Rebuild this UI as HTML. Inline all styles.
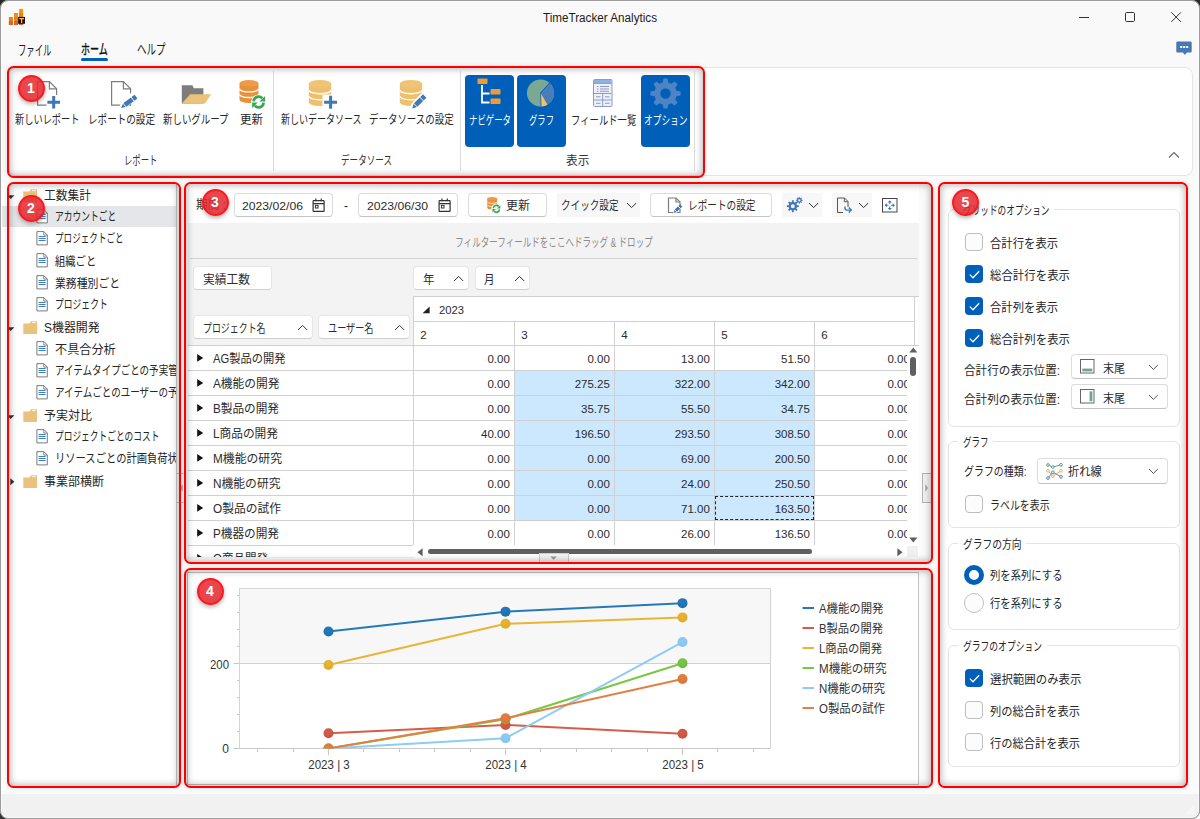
<!DOCTYPE html>
<html lang="ja"><head><meta charset="utf-8"><title>TimeTracker Analytics</title>
<style>
html,body{margin:0;padding:0;}
body{width:1200px;height:819px;overflow:hidden;background:#f9f9f9;position:relative;font-family:"Liberation Sans","Noto Sans CJK JP",sans-serif;}
#w div,#w span,#w svg{position:absolute;box-sizing:border-box;}
#w{position:absolute;left:0;top:0;width:1200px;height:819px;overflow:hidden;}
.t{white-space:nowrap;line-height:20px;height:20px;display:block;}
.btn{background:#fff;border:1px solid #dcdcdc;border-bottom-color:#c4c4c4;border-radius:4px;}
.pbtn{background:#fff;border:1px solid #e6e6e6;border-bottom-color:#cfcfcf;border-radius:4px;}
.red{border:2.1px solid #f00;border-radius:6.5px;box-shadow:inset 0 0 7px 1px rgba(0,0,0,.30),0 0 5px rgba(0,0,0,.13);}
.badge{border-radius:50%;background:radial-gradient(circle at 50% 40%,rgba(232,45,52,.86) 0,rgba(225,38,45,.86) 60%,rgba(222,30,38,.88) 100%);border:2px solid rgba(255,22,28,.96);box-shadow:0 2px 4px rgba(0,0,0,.3);}
.gb{border:1px solid #e3e3e3;border-radius:6px;}
.cb{width:18px;height:18px;border-radius:4px;border:1px solid #bdbdbd;background:#fcfcfc;}
.cbk{width:18px;height:18px;border-radius:4px;background:#005fb8;}
</style></head>
<body><div id="w">
<div style="left:1188px;top:0px;width:12px;height:12px;background:#2a2a2a;"></div>
<div style="left:0px;top:0px;width:12px;height:12px;background:#2a2a2a;"></div>
<div style="left:0px;top:807px;width:12px;height:12px;background:#333;"></div>
<div style="left:0px;top:0px;width:1200px;height:819px;background:#f9f9f9;border:1px solid #9a9a9a;border-radius:8px;"></div>
<div style="left:1px;top:794px;width:1198px;height:24px;background:#f1f1f1;border-radius:0 0 7px 7px;"></div>
<svg style="left:8px;top:8px;" width="18" height="18" viewBox="0 0 18 18"><rect x=".9" y="9" width="4" height="8" fill="#e8801e"/><rect x=".9" y="13" width="4" height="4" fill="#e0622e"/>
<rect x="6" y="5" width="4" height="12" fill="#f09208"/><rect x="6" y="9" width="4" height="8" fill="#e8801e"/><rect x="6" y="13" width="4" height="4" fill="#e0622e"/>
<rect x="11.1" y=".9" width="4" height="16.1" fill="#f29a06"/><rect x="11.1" y="5" width="4" height="12" fill="#e8801e"/><rect x="11.1" y="13" width="4" height="4" fill="#e0622e"/>
<rect x="10.1" y="8.9" width="6.9" height="6.9" fill="#2a0f1a"/><path d="M11.2 10h4.8v1.3h-1.8v3.7h-1.2v-3.7h-1.8z" fill="#f8c233"/></svg>
<span class="t" style="top:7.50px;font-size:12px;color:#1b1b1b;left:599.50px;transform-origin:0 50%;transform:translateX(-48.660%) scaleX(0.9732);">TimeTracker Analytics</span>
<svg style="left:1075px;top:8px;" width="112" height="20" viewBox="0 0 112 20"><path d="M4 9.5h10" stroke="#333" stroke-width="1" fill="none"/>
<rect x="50.5" y="4.5" width="9" height="9" rx="1.2" stroke="#333" stroke-width="1" fill="none"/>
<path d="M96.3 4.3l9.6 9.6M105.9 4.3l-9.6 9.6" stroke="#333" stroke-width="1" fill="none"/></svg>
<span class="t" style="top:39.50px;font-size:14px;color:#1b1b1b;left:18.30px;transform-origin:0 50%;transform:scaleX(0.5946);">ファイル</span>
<span class="t" style="top:38.50px;font-size:14px;color:#111;left:81.30px;transform-origin:0 50%;transform:scaleX(0.6419);-webkit-text-stroke:0.4px #111;">ホーム</span>
<div style="left:81.3px;top:58px;width:26.7px;height:3px;background:#005fb8;border-radius:1.5px;"></div>
<span class="t" style="top:38.50px;font-size:14px;color:#1b1b1b;left:136.70px;transform-origin:0 50%;transform:scaleX(0.6810);">ヘルプ</span>
<svg style="left:1176px;top:41px;" width="16" height="16" viewBox="0 0 16 16"><path d="M1.5 0.5h13a1.2 1.2 0 0 1 1.2 1.2v8.6a1.2 1.2 0 0 1-1.2 1.2h-3.6l-2 2.6-2-2.6H1.5a1.2 1.2 0 0 1-1.2-1.2V1.7A1.2 1.2 0 0 1 1.5.5z" fill="#4878b4"/><rect x="4.2" y="5" width="2" height="2" fill="#fff"/><rect x="7.2" y="5" width="2" height="2" fill="#fff"/><rect x="10.2" y="5" width="2" height="2" fill="#fff"/></svg>
<div style="left:8px;top:67px;width:1185px;height:109px;background:#fff;border:1px solid #e4e4e4;border-radius:8px;"></div>
<div style="left:273px;top:71px;width:1px;height:100px;background:#dcdcdc;"></div>
<div style="left:460px;top:71px;width:1px;height:100px;background:#dcdcdc;"></div>
<div style="left:694px;top:71px;width:1px;height:100px;background:#dcdcdc;"></div>
<div style="left:465px;top:75px;width:49px;height:72px;background:#005fb8;border-radius:4px;"></div>
<div style="left:517px;top:75px;width:49px;height:72px;background:#005fb8;border-radius:4px;"></div>
<div style="left:641px;top:75px;width:49px;height:72px;background:#005fb8;border-radius:4px;"></div>
<svg style="left:1166px;top:150px;" width="16" height="10" viewBox="0 0 16 10"><path d="M3 7.5l5-5 5 5" stroke="#666" stroke-width="1.1" fill="none"/></svg>
<svg style="left:36px;top:78px;" width="28" height="32" viewBox="0 0 28 32"><path d="M1.6 3.6h11.8l7.2 7.2v16.400000000000002h-19z" fill="#fff" stroke="#7d7d7d" stroke-width="1.2"/><path d="M13.400000000000002 3.6v7.2h7.2" fill="none" stroke="#7d7d7d" stroke-width="1.2"/><rect x="10.5" y="17" width="15" height="14" fill="#fff"/><path d="M11.399999999999999 24.2h12.6M17.7 17.9v12.6" stroke="#3f78b5" stroke-width="3" fill="none"/></svg>
<svg style="left:110px;top:78px;" width="30" height="32" viewBox="0 0 30 32"><path d="M1.6 3.6h11.8l7.2 7.2v16.400000000000002h-19z" fill="#fff" stroke="#7d7d7d" stroke-width="1.2"/><path d="M13.400000000000002 3.6v7.2h7.2" fill="none" stroke="#7d7d7d" stroke-width="1.2"/><path d="M9 31l1.5-5.5 12-12 5.5 5-12 12z" fill="#fff"/><path d="M15.98 29.09L27.41 20.48L24.59 16.72L13.15 25.34z" fill="#3f78b5"/><path d="M11.00 29.90L15.98 29.09L13.15 25.34z" fill="#3f78b5"/><path d="M24.46 23.59L20.78 18.71" stroke="#fff" stroke-width="1"/><path d="M16.40 29.65L12.73 24.77" stroke="#fff" stroke-width="0.8"/></svg>
<svg style="left:181px;top:83px;" width="32" height="24" viewBox="0 0 32 24"><path d="M.8 2.2h10.6l1.4 3h9.6v15.3H.8z" fill="#7d7d7d"/>
<path d="M9.2 11.2h21L24 20.6H.7z" fill="#ecc179"/></svg>
<svg style="left:238px;top:78px;" width="30" height="33" viewBox="0 0 30 33"><path d="M1.5 5.23v16.54a9.5 3.2300000000000004 0 0 0 19 0v-16.54z" fill="#e8913a"/><ellipse cx="11.0" cy="5.23" rx="9.5" ry="3.2300000000000004" fill="#ec9c48"/><path d="M1.5 10.743333333333332a9.5 3.2300000000000004 0 0 0 19 0" fill="none" stroke="#fff" stroke-width="1.3"/><path d="M1.5 16.256666666666668a9.5 3.2300000000000004 0 0 0 19 0" fill="none" stroke="#fff" stroke-width="1.3"/><circle cx="20.6" cy="24" r="7.55" fill="#fff"/><path d="M15.600000000000001 23.4a5 5 0 0 1 8.75 -3.1" fill="none" stroke="#34a853" stroke-width="2.7"/><path d="M25.6 24.6a5 5 0 0 1 -8.75 3.1" fill="none" stroke="#34a853" stroke-width="2.7"/><path d="M27.085 17.92v5.5600000000000005h-5.5600000000000005z" fill="#34a853"/><path d="M14.115000000000002 30.08v-5.5600000000000005h5.5600000000000005z" fill="#34a853"/></svg>
<svg style="left:307px;top:78px;" width="32" height="33" viewBox="0 0 32 33"><path d="M1.8 5.808v18.384a11.2 3.808 0 0 0 22.4 0v-18.384z" fill="#ecc06f"/><ellipse cx="13.0" cy="5.808" rx="11.2" ry="3.808" fill="#efc575"/><path d="M1.8 11.936a11.2 3.808 0 0 0 22.4 0" fill="none" stroke="#fff" stroke-width="1.3"/><path d="M1.8 18.064a11.2 3.808 0 0 0 22.4 0" fill="none" stroke="#fff" stroke-width="1.3"/><rect x="15.5" y="16.5" width="16.5" height="16" fill="#fff"/><path d="M17.1 24.2h13M23.6 17.7v13" stroke="#3f78b5" stroke-width="3" fill="none"/></svg>
<svg style="left:398px;top:78px;" width="32" height="33" viewBox="0 0 32 33"><path d="M1.8 5.808v18.384a11.2 3.808 0 0 0 22.4 0v-18.384z" fill="#ecc06f"/><ellipse cx="13.0" cy="5.808" rx="11.2" ry="3.808" fill="#efc575"/><path d="M1.8 11.936a11.2 3.808 0 0 0 22.4 0" fill="none" stroke="#fff" stroke-width="1.3"/><path d="M1.8 18.064a11.2 3.808 0 0 0 22.4 0" fill="none" stroke="#fff" stroke-width="1.3"/><path d="M11.5 32l2-6.5 12-12.3 5.6 5.2-12 12.3z" fill="#fff"/><path d="M19.13 28.89L28.39 19.70L25.01 16.30L15.75 25.48z" fill="#3f78b5"/><path d="M14.20 30.40L19.13 28.89L15.75 25.48z" fill="#3f78b5"/><path d="M25.83 23.26L21.44 18.83" stroke="#fff" stroke-width="1"/><path d="M19.63 29.40L15.24 24.97" stroke="#fff" stroke-width="0.8"/></svg>
<svg style="left:475px;top:77px;" width="30" height="32" viewBox="0 0 30 32"><rect x="2.5" y="1.5" width="10" height="5.6" rx="0.8" fill="#ef9a3a"/><path d="M7 8v17.5h7.5M7 16.5h7.5" stroke="#fff" stroke-width="1.8" fill="none"/>
<rect x="15.5" y="12" width="10" height="5.6" rx="0.8" fill="#ef9a3a"/><rect x="15.5" y="21.5" width="10" height="5.6" rx="0.8" fill="#ef9a3a"/></svg>
<svg style="left:526.4px;top:78px;" width="30" height="30" viewBox="0 0 30 30"><circle cx="14.5" cy="15" r="13.6" fill="#7ba893"/><path d="M14.5 15L23.6 4.9A13.6 13.6 0 0 1 21.4 26.7z" fill="#4a7cba"/><path d="M14.5 15l6.9 11.7a13.6 13.6 0 0 1-6.3 1.9z" fill="#f3c363"/><path d="M14.5 15L23.6 4.9" stroke="#005fb8" stroke-width="1"/><path d="M14.5 15l.6 13.6" stroke="#005fb8" stroke-width=".8"/></svg>
<svg style="left:592px;top:77.5px;" width="22" height="30" viewBox="0 0 22 30"><rect x="1.5" y="1.5" width="18.5" height="27" rx="1" fill="#eef1fa" stroke="#8e9ac8" stroke-width="1"/>
<rect x="2" y="2" width="17.5" height="3.2" fill="#8fb2e0"/><path d="M2 5.4h17.5M2 15.5h17.5M2 22h17.5M10.7 15.5v13" stroke="#8e9ac8" stroke-width="1"/>
<path d="M5 8.5h1.5M8 8.5h9M5 11h1.5M8 11h9M5 13.3h1.5M8 13.3h9M4 18.8h4.5M13 18.8h4.5M4 25.3h4.5M13 25.3h4.5" stroke="#8e9ac8" stroke-width="1"/></svg>
<svg style="left:648.6px;top:76.8px;" width="34" height="34" viewBox="0 0 34 34"><path d="M27.45 13.73L31.57 14.50L31.57 18.50L27.45 19.27L26.21 22.29L28.57 25.74L25.74 28.57L22.29 26.21L19.27 27.45L18.50 31.57L14.50 31.57L13.73 27.45L10.71 26.21L7.26 28.57L4.43 25.74L6.79 22.29L5.55 19.27L1.43 18.50L1.43 14.50L5.55 13.73L6.79 10.71L4.43 7.26L7.26 4.43L10.71 6.79L13.73 5.55L14.50 1.43L18.50 1.43L19.27 5.55L22.29 6.79L25.74 4.43L28.57 7.26L26.21 10.71zM21.7 16.5a5.2 5.2 0 1 0 -10.4 0a5.2 5.2 0 1 0 10.4 0z" fill="#4f84c4" fill-rule="evenodd"/></svg>
<span class="t" style="top:110.30px;font-size:12px;color:#262626;left:15.00px;transform-origin:0 50%;transform:scaleX(0.7677);">新しいレポート</span>
<span class="t" style="top:110.30px;font-size:12px;color:#262626;left:87.50px;transform-origin:0 50%;transform:scaleX(0.7975);">レポートの設定</span>
<span class="t" style="top:110.30px;font-size:12px;color:#262626;left:162.50px;transform-origin:0 50%;transform:scaleX(0.7865);">新しいグループ</span>
<span class="t" style="top:110.30px;font-size:12px;color:#262626;left:239.50px;transform-origin:0 50%;transform:scaleX(0.9577);">更新</span>
<span class="t" style="top:110.30px;font-size:12px;color:#262626;left:280.50px;transform-origin:0 50%;transform:scaleX(0.7495);">新しいデータソース</span>
<span class="t" style="top:110.30px;font-size:12px;color:#262626;left:369.00px;transform-origin:0 50%;transform:scaleX(0.7886);">データソースの設定</span>
<span class="t" style="top:110.60px;font-size:12px;color:#fff;left:468.50px;transform-origin:0 50%;transform:scaleX(0.6998);">ナビゲータ</span>
<span class="t" style="top:110.60px;font-size:12px;color:#fff;left:529.00px;transform-origin:0 50%;transform:scaleX(0.6941);">グラフ</span>
<span class="t" style="top:110.60px;font-size:12px;color:#262626;left:570.70px;transform-origin:0 50%;transform:scaleX(0.7796);">フィールド一覧</span>
<span class="t" style="top:110.60px;font-size:12px;color:#fff;left:644.00px;transform-origin:0 50%;transform:scaleX(0.7248);">オプション</span>
<span class="t" style="top:151.00px;font-size:12px;color:#333;left:124.00px;transform-origin:0 50%;transform:scaleX(0.6977);">レポート</span>
<span class="t" style="top:151.00px;font-size:12px;color:#333;left:341.00px;transform-origin:0 50%;transform:scaleX(0.7142);">データソース</span>
<span class="t" style="top:151.00px;font-size:12px;color:#333;left:565.50px;transform-origin:0 50%;transform:scaleX(0.9702);">表示</span>
<div style="left:1px;top:176px;width:1198px;height:618px;background:#fbfbfb;"></div>
<div style="left:2px;top:183px;width:175px;height:605px;background:#fff;border-right:1px solid #c8c8c8;"></div>
<div style="left:2px;top:206px;width:174px;height:21px;background:#e5e6e9;"></div>
<div style="left:2px;top:183px;width:174px;height:604px;overflow:hidden;">
<svg style="left:21px;top:5.5px;" width="15" height="14" viewBox="0 0 15 14"><path d="M.3 2.5h6.2l1-1.8a.8.8 0 0 1 .7-.4h5.3a.6.6 0 0 1 .6.6v12.1H.3z" fill="#e9c27e"/><rect x="9" y="1.2" width="3.8" height=".9" fill="#fff"/></svg>
<span class="t" style="top:3.40px;font-size:12.5px;color:#262626;left:42.00px;transform-origin:0 50%;transform:scaleX(0.9377);">工数集計</span>
<svg style="left:4.6px;top:11.8px;" width="8" height="5" viewBox="0 0 8 5"><path d="M0 .2h7.4L3.7 3.9z" fill="#333"/></svg>
<svg style="left:33.5px;top:26.0px;" width="12" height="15" viewBox="0 0 12 15"><path d="M.9 .6h7L11.3 4v9.9H.9z" fill="#fff" stroke="#7a7a7a" stroke-width="1"/><path d="M7.8 .8v3.3h3.3" fill="none" stroke="#7a7a7a" stroke-width=".9"/><path d="M2.6 5.5h7M2.6 7.5h7M2.6 9.5h7" stroke="#3f7fc4" stroke-width="1"/></svg>
<span class="t" style="top:24.30px;font-size:12.5px;color:#262626;left:53.30px;transform-origin:0 50%;transform:scaleX(0.6993);">アカウントごと</span>
<svg style="left:33.5px;top:48.0px;" width="12" height="15" viewBox="0 0 12 15"><path d="M.9 .6h7L11.3 4v9.9H.9z" fill="#fff" stroke="#7a7a7a" stroke-width="1"/><path d="M7.8 .8v3.3h3.3" fill="none" stroke="#7a7a7a" stroke-width=".9"/><path d="M2.6 5.5h7M2.6 7.5h7M2.6 9.5h7" stroke="#3f7fc4" stroke-width="1"/></svg>
<span class="t" style="top:46.30px;font-size:12.5px;color:#262626;left:53.30px;transform-origin:0 50%;transform:scaleX(0.6869);">プロジェクトごと</span>
<svg style="left:33.5px;top:70.0px;" width="12" height="15" viewBox="0 0 12 15"><path d="M.9 .6h7L11.3 4v9.9H.9z" fill="#fff" stroke="#7a7a7a" stroke-width="1"/><path d="M7.8 .8v3.3h3.3" fill="none" stroke="#7a7a7a" stroke-width=".9"/><path d="M2.6 5.5h7M2.6 7.5h7M2.6 9.5h7" stroke="#3f7fc4" stroke-width="1"/></svg>
<span class="t" style="top:69.20px;font-size:12.5px;color:#262626;left:53.30px;transform-origin:0 50%;transform:scaleX(0.8237);">組織ごと</span>
<svg style="left:33.5px;top:92.0px;" width="12" height="15" viewBox="0 0 12 15"><path d="M.9 .6h7L11.3 4v9.9H.9z" fill="#fff" stroke="#7a7a7a" stroke-width="1"/><path d="M7.8 .8v3.3h3.3" fill="none" stroke="#7a7a7a" stroke-width=".9"/><path d="M2.6 5.5h7M2.6 7.5h7M2.6 9.5h7" stroke="#3f7fc4" stroke-width="1"/></svg>
<span class="t" style="top:91.20px;font-size:12.5px;color:#262626;left:53.30px;transform-origin:0 50%;transform:scaleX(0.8692);">業務種別ごと</span>
<svg style="left:33.5px;top:114.0px;" width="12" height="15" viewBox="0 0 12 15"><path d="M.9 .6h7L11.3 4v9.9H.9z" fill="#fff" stroke="#7a7a7a" stroke-width="1"/><path d="M7.8 .8v3.3h3.3" fill="none" stroke="#7a7a7a" stroke-width=".9"/><path d="M2.6 5.5h7M2.6 7.5h7M2.6 9.5h7" stroke="#3f7fc4" stroke-width="1"/></svg>
<span class="t" style="top:112.30px;font-size:12.5px;color:#262626;left:53.30px;transform-origin:0 50%;transform:scaleX(0.7025);">プロジェクト</span>
<svg style="left:21px;top:137.5px;" width="15" height="14" viewBox="0 0 15 14"><path d="M.3 2.5h6.2l1-1.8a.8.8 0 0 1 .7-.4h5.3a.6.6 0 0 1 .6.6v12.1H.3z" fill="#e9c27e"/><rect x="9" y="1.2" width="3.8" height=".9" fill="#fff"/></svg>
<span class="t" style="top:135.40px;font-size:12.5px;color:#262626;left:42.00px;transform-origin:0 50%;transform:scaleX(0.9547);">S機器開発</span>
<svg style="left:4.6px;top:143.8px;" width="8" height="5" viewBox="0 0 8 5"><path d="M0 .2h7.4L3.7 3.9z" fill="#333"/></svg>
<svg style="left:33.5px;top:158.0px;" width="12" height="15" viewBox="0 0 12 15"><path d="M.9 .6h7L11.3 4v9.9H.9z" fill="#fff" stroke="#7a7a7a" stroke-width="1"/><path d="M7.8 .8v3.3h3.3" fill="none" stroke="#7a7a7a" stroke-width=".9"/><path d="M2.6 5.5h7M2.6 7.5h7M2.6 9.5h7" stroke="#3f7fc4" stroke-width="1"/></svg>
<span class="t" style="top:157.20px;font-size:12.5px;color:#262626;left:53.30px;transform-origin:0 50%;transform:scaleX(0.9710);">不具合分析</span>
<svg style="left:33.5px;top:180.0px;" width="12" height="15" viewBox="0 0 12 15"><path d="M.9 .6h7L11.3 4v9.9H.9z" fill="#fff" stroke="#7a7a7a" stroke-width="1"/><path d="M7.8 .8v3.3h3.3" fill="none" stroke="#7a7a7a" stroke-width=".9"/><path d="M2.6 5.5h7M2.6 7.5h7M2.6 9.5h7" stroke="#3f7fc4" stroke-width="1"/></svg>
<span class="t" style="top:178.30px;font-size:12.5px;color:#262626;left:53.30px;transform-origin:0 50%;transform:scaleX(0.7613);">アイテムタイプごとの予実管理</span>
<svg style="left:33.5px;top:202.0px;" width="12" height="15" viewBox="0 0 12 15"><path d="M.9 .6h7L11.3 4v9.9H.9z" fill="#fff" stroke="#7a7a7a" stroke-width="1"/><path d="M7.8 .8v3.3h3.3" fill="none" stroke="#7a7a7a" stroke-width=".9"/><path d="M2.6 5.5h7M2.6 7.5h7M2.6 9.5h7" stroke="#3f7fc4" stroke-width="1"/></svg>
<span class="t" style="top:200.30px;font-size:12.5px;color:#262626;left:53.30px;transform-origin:0 50%;transform:scaleX(0.7624);">アイテムごとのユーザーの予実</span>
<svg style="left:21px;top:225.5px;" width="15" height="14" viewBox="0 0 15 14"><path d="M.3 2.5h6.2l1-1.8a.8.8 0 0 1 .7-.4h5.3a.6.6 0 0 1 .6.6v12.1H.3z" fill="#e9c27e"/><rect x="9" y="1.2" width="3.8" height=".9" fill="#fff"/></svg>
<span class="t" style="top:223.40px;font-size:12.5px;color:#262626;left:42.00px;transform-origin:0 50%;transform:scaleX(0.9577);">予実対比</span>
<svg style="left:4.6px;top:231.8px;" width="8" height="5" viewBox="0 0 8 5"><path d="M0 .2h7.4L3.7 3.9z" fill="#333"/></svg>
<svg style="left:33.5px;top:246.0px;" width="12" height="15" viewBox="0 0 12 15"><path d="M.9 .6h7L11.3 4v9.9H.9z" fill="#fff" stroke="#7a7a7a" stroke-width="1"/><path d="M7.8 .8v3.3h3.3" fill="none" stroke="#7a7a7a" stroke-width=".9"/><path d="M2.6 5.5h7M2.6 7.5h7M2.6 9.5h7" stroke="#3f7fc4" stroke-width="1"/></svg>
<span class="t" style="top:244.30px;font-size:12.5px;color:#262626;left:53.30px;transform-origin:0 50%;transform:scaleX(0.6965);">プロジェクトごとのコスト</span>
<svg style="left:33.5px;top:268.0px;" width="12" height="15" viewBox="0 0 12 15"><path d="M.9 .6h7L11.3 4v9.9H.9z" fill="#fff" stroke="#7a7a7a" stroke-width="1"/><path d="M7.8 .8v3.3h3.3" fill="none" stroke="#7a7a7a" stroke-width=".9"/><path d="M2.6 5.5h7M2.6 7.5h7M2.6 9.5h7" stroke="#3f7fc4" stroke-width="1"/></svg>
<span class="t" style="top:266.30px;font-size:12.5px;color:#262626;left:53.30px;transform-origin:0 50%;transform:scaleX(0.8234);">リソースごとの計画負荷状況</span>
<svg style="left:21px;top:291.5px;" width="15" height="14" viewBox="0 0 15 14"><path d="M.3 2.5h6.2l1-1.8a.8.8 0 0 1 .7-.4h5.3a.6.6 0 0 1 .6.6v12.1H.3z" fill="#e9c27e"/><rect x="9" y="1.2" width="3.8" height=".9" fill="#fff"/></svg>
<span class="t" style="top:289.40px;font-size:12.5px;color:#262626;left:42.00px;transform-origin:0 50%;transform:scaleX(0.9582);">事業部横断</span>
<svg style="left:8px;top:294.5px;" width="6" height="8" viewBox="0 0 6 8"><path d="M.3 .3v7L4.4 3.8z" fill="#333"/></svg>
</div>
<div style="left:177px;top:473px;width:7px;height:1px;background:#c4c4c4;"></div>
<div style="left:177px;top:502px;width:7px;height:1px;background:#c4c4c4;"></div>
<svg style="left:180px;top:484px;" width="3" height="8" viewBox="0 0 3 8"><path d="M2.6 .2v7.6L.2 4z" fill="#999"/></svg>
<div style="left:922px;top:473px;width:10px;height:30px;background:#f1f1f1;border:1px solid #b4b4b4;"></div>
<svg style="left:925px;top:484px;" width="4" height="8" viewBox="0 0 4 8"><path d="M.2 .2v7.6L3.2 4z" fill="#aaa"/></svg>
<div style="left:186px;top:184px;width:733px;height:374px;background:#fff;"></div>
<span class="t" style="top:195.00px;font-size:12px;color:#2b2b2b;left:196.00px;transform-origin:0 50%;transform:scaleX(0.9781);">期間 :</span>
<div class="btn" style="left:233.5px;top:193px;width:99px;height:24px;"></div>
<span class="t" style="top:196.30px;font-size:11.5px;color:#2b2b2b;left:242.00px;transform-origin:0 50%;transform:scaleX(1.0597);">2023/02/06</span>
<svg style="left:312.3px;top:197.8px;" width="14" height="14" viewBox="0 0 14 14"><rect x="1.1" y="2.6" width="11" height="10.8" rx=".6" fill="none" stroke="#333" stroke-width="1.2"/><path d="M1.1 5.6h11M3.9 .6v2.6M9.3 .6v2.6" stroke="#333" stroke-width="1.2" fill="none"/><rect x="3.4" y="7.4" width="2.6" height="2.6" fill="none" stroke="#333" stroke-width="1"/></svg>
<span class="t" style="top:195.60px;font-size:12px;color:#262626;left:344.00px;transform-origin:0 50%;transform:scaleX(1.0000);">-</span>
<div class="btn" style="left:358px;top:193px;width:99.5px;height:24px;"></div>
<span class="t" style="top:196.30px;font-size:11.5px;color:#2b2b2b;left:367.00px;transform-origin:0 50%;transform:scaleX(1.0597);">2023/06/30</span>
<svg style="left:437.8px;top:197.8px;" width="14" height="14" viewBox="0 0 14 14"><rect x="1.1" y="2.6" width="11" height="10.8" rx=".6" fill="none" stroke="#333" stroke-width="1.2"/><path d="M1.1 5.6h11M3.9 .6v2.6M9.3 .6v2.6" stroke="#333" stroke-width="1.2" fill="none"/><rect x="3.4" y="7.4" width="2.6" height="2.6" fill="none" stroke="#333" stroke-width="1"/></svg>
<div class="btn" style="left:468px;top:193px;width:79px;height:24px;"></div>
<svg style="left:486px;top:196px;" width="16" height="18" viewBox="0 0 16 18"><path d="M1.2 2.7v9.1a5.0 1.7000000000000002 0 0 0 10 0v-9.1z" fill="#e8913a"/><ellipse cx="6.2" cy="2.7" rx="5.0" ry="1.7000000000000002" fill="#ec9c48"/><path d="M1.2 5.733333333333333a5.0 1.7000000000000002 0 0 0 10 0" fill="none" stroke="#fff" stroke-width="0.7"/><path d="M1.2 8.766666666666666a5.0 1.7000000000000002 0 0 0 10 0" fill="none" stroke="#fff" stroke-width="0.7"/><circle cx="10.4" cy="12.8" r="5.05" fill="#fff"/><path d="M7.4 12.200000000000001a3 3 0 0 1 5.25 -1.8599999999999999" fill="none" stroke="#34a853" stroke-width="1.7"/><path d="M13.4 13.4a3 3 0 0 1 -5.25 1.8599999999999999" fill="none" stroke="#34a853" stroke-width="1.7"/><path d="M14.335 9.120000000000001v3.3599999999999994h-3.3599999999999994z" fill="#34a853"/><path d="M6.465 16.48v-3.3599999999999994h3.3599999999999994z" fill="#34a853"/></svg>
<span class="t" style="top:196.00px;font-size:12px;color:#2b2b2b;left:506.20px;transform-origin:0 50%;transform:scaleX(0.9993);">更新</span>
<div style="left:557px;top:193px;width:82.5px;height:23.5px;background:#f7f7f7;"></div>
<span class="t" style="top:196.10px;font-size:12px;color:#2b2b2b;left:561.20px;transform-origin:0 50%;transform:scaleX(0.7984);">クイック設定</span>
<svg style="left:625.5px;top:201.5px;" width="12" height="8" viewBox="0 0 12 8"><path d="M1 1l4.6 4.6L10.2 1" stroke="#333" stroke-width="1" fill="none"/></svg>
<div class="btn" style="left:649.5px;top:193px;width:122.5px;height:24px;"></div>
<svg style="left:666.5px;top:197px;" width="17" height="17" viewBox="0 0 17 17"><path d="M1.5 1h7.5l4 4v10.5h-11.5z" fill="#fff" stroke="#7d7d7d" stroke-width="1.2"/><path d="M9.0 1v4h4" fill="none" stroke="#7d7d7d" stroke-width="1.2"/><path d="M6 16.5l.8-3.4 5.4-5.4 2.6 2.6-5.4 5.4z" fill="#fff"/><path d="M9.78 14.91L15.30 9.40L13.10 7.20L7.59 12.72z" fill="#3f78b5"/><path d="M6.60 15.90L9.78 14.91L7.59 12.72z" fill="#3f78b5"/><path d="M13.65 11.70L10.80 8.85" stroke="#fff" stroke-width="1"/><path d="M10.11 15.24L7.26 12.39" stroke="#fff" stroke-width="0.8"/></svg>
<span class="t" style="top:196.10px;font-size:12px;color:#2b2b2b;left:687.50px;transform-origin:0 50%;transform:scaleX(0.8034);">レポートの設定</span>
<div style="left:782px;top:193px;width:40px;height:23.5px;background:#f7f7f7;"></div>
<svg style="left:786px;top:196px;" width="18" height="18" viewBox="0 0 18 18"><path d="M10.88 9.22L12.74 9.35L12.74 11.05L10.88 11.18L10.38 12.39L11.60 13.80L10.40 15.00L8.99 13.78L7.78 14.28L7.65 16.14L5.95 16.14L5.82 14.28L4.61 13.78L3.20 15.00L2.00 13.80L3.22 12.39L2.72 11.18L0.86 11.05L0.86 9.35L2.72 9.22L3.22 8.01L2.00 6.60L3.20 5.40L4.61 6.62L5.82 6.12L5.95 4.26L7.65 4.26L7.78 6.12L8.99 6.62L10.40 5.40L11.60 6.60L10.38 8.01zM8.8 10.2a2 2 0 1 0 -4 0a2 2 0 1 0 4 0z" fill="#3f78b5" fill-rule="evenodd"/><path d="M15.54 3.76L16.67 3.82L16.67 4.78L15.54 4.84L15.26 5.50L16.02 6.34L15.34 7.02L14.50 6.26L13.84 6.54L13.78 7.67L12.82 7.67L12.76 6.54L12.10 6.26L11.26 7.02L10.58 6.34L11.34 5.50L11.06 4.84L9.93 4.78L9.93 3.82L11.06 3.76L11.34 3.10L10.58 2.26L11.26 1.58L12.10 2.34L12.76 2.06L12.82 0.93L13.78 0.93L13.84 2.06L14.50 2.34L15.34 1.58L16.02 2.26L15.26 3.10zM14.4 4.3a1.1 1.1 0 1 0 -2.2 0a1.1 1.1 0 1 0 2.2 0z" fill="#3f78b5" fill-rule="evenodd"/></svg>
<svg style="left:808.3px;top:201.5px;" width="12" height="8" viewBox="0 0 12 8"><path d="M1 1l4.6 4.6L10.2 1" stroke="#333" stroke-width="1" fill="none"/></svg>
<div style="left:832px;top:193px;width:40px;height:23.5px;background:#f7f7f7;"></div>
<svg style="left:836px;top:196.5px;" width="18" height="18" viewBox="0 0 18 18"><path d="M7 15.5H1.5V1h7l3.5 3.5v5.5" fill="none" stroke="#555" stroke-width="1"/><path d="M8.3 1.2v3.5h3.5" fill="none" stroke="#555" stroke-width="1"/><path d="M9 9.5v1.6a2 2 0 0 0 2 2h4" fill="none" stroke="#3f78b5" stroke-width="1.4"/><path d="M12.8 10.6l2.5 2.5-2.5 2.5" fill="none" stroke="#3f78b5" stroke-width="1.4"/></svg>
<svg style="left:858.3px;top:201.5px;" width="12" height="8" viewBox="0 0 12 8"><path d="M1 1l4.6 4.6L10.2 1" stroke="#333" stroke-width="1" fill="none"/></svg>
<svg style="left:881.5px;top:197.5px;" width="16" height="15" viewBox="0 0 16 15"><rect x=".5" y=".5" width="14.5" height="13.5" fill="#fff" stroke="#444" stroke-width="1"/><path d="M7.75 3.5v2.6M7.75 8.4v2.6M3.8 7.25h2.7M9 7.25h2.7" stroke="#3f78b5" stroke-width="1.1" fill="none"/><path d="M5.7 4.6l2.05-2.3L9.8 4.6zM5.7 9.9l2.05 2.3L9.8 9.9zM4.8 5.2L2.5 7.25 4.8 9.3zM10.7 5.2L13 7.25 10.7 9.3z" fill="#3f78b5"/></svg>
<div style="left:187.5px;top:223px;width:731.5px;height:335px;background:#f3f3f3;"></div>
<span class="t" style="top:232.50px;font-size:12px;color:#8c8c8c;left:554.20px;transform-origin:0 50%;transform:translateX(-35.590%) scaleX(0.7118);">フィルターフィールドをここへドラッグ &amp; ドロップ</span>
<div style="left:190px;top:258px;width:727px;height:1px;background:#d2d2d2;"></div>
<div class="pbtn" style="left:193px;top:266px;width:79px;height:24px;"></div>
<span class="t" style="top:270.00px;font-size:12px;color:#2b2b2b;left:202.50px;transform-origin:0 50%;transform:scaleX(0.9788);">実績工数</span>
<div class="pbtn" style="left:413px;top:266px;width:56px;height:24px;"></div>
<span class="t" style="top:269.80px;font-size:12px;color:#2b2b2b;left:422.50px;transform-origin:0 50%;transform:scaleX(0.9571);">年</span>
<svg style="left:453px;top:274.5px;" width="12" height="8" viewBox="0 0 12 8"><path d="M1 6l4.6-4.6L10.2 6" stroke="#333" stroke-width="1" fill="none"/></svg>
<div class="pbtn" style="left:475px;top:266px;width:55px;height:24px;"></div>
<span class="t" style="top:269.50px;font-size:12px;color:#2b2b2b;left:483.70px;transform-origin:0 50%;transform:scaleX(0.8739);">月</span>
<svg style="left:514px;top:274.5px;" width="12" height="8" viewBox="0 0 12 8"><path d="M1 6l4.6-4.6L10.2 6" stroke="#333" stroke-width="1" fill="none"/></svg>
<div class="pbtn" style="left:193px;top:315px;width:120px;height:24px;"></div>
<span class="t" style="top:319.10px;font-size:12px;color:#2b2b2b;left:202.50px;transform-origin:0 50%;transform:scaleX(0.7439);">プロジェクト名</span>
<svg style="left:297.3px;top:323.5px;" width="12" height="8" viewBox="0 0 12 8"><path d="M1 6l4.6-4.6L10.2 6" stroke="#333" stroke-width="1" fill="none"/></svg>
<div class="pbtn" style="left:318px;top:315px;width:92px;height:24px;"></div>
<span class="t" style="top:319.10px;font-size:12px;color:#2b2b2b;left:327.50px;transform-origin:0 50%;transform:scaleX(0.7613);">ユーザー名</span>
<svg style="left:394.3px;top:323.5px;" width="12" height="8" viewBox="0 0 12 8"><path d="M1 6l4.6-4.6L10.2 6" stroke="#333" stroke-width="1" fill="none"/></svg>
<div style="left:413px;top:296px;width:506px;height:50px;background:#fff;"></div>
<div style="left:413px;top:296px;width:506px;height:1px;background:#d0d0d0;"></div>
<div style="left:413px;top:321px;width:502px;height:1px;background:#d0d0d0;"></div>
<div style="left:188px;top:345px;width:731px;height:1px;background:#d0d0d0;"></div>
<div style="left:413px;top:296px;width:1px;height:50px;background:#d0d0d0;"></div>
<div style="left:514px;top:321px;width:1px;height:25px;background:#d0d0d0;"></div>
<div style="left:614px;top:321px;width:1px;height:25px;background:#d0d0d0;"></div>
<div style="left:714px;top:321px;width:1px;height:25px;background:#d0d0d0;"></div>
<div style="left:814px;top:321px;width:1px;height:25px;background:#d0d0d0;"></div>
<div style="left:914px;top:296px;width:1px;height:50px;background:#d0d0d0;"></div>
<svg style="left:421.5px;top:306px;" width="9" height="8" viewBox="0 0 9 8"><path d="M7.6 .4v6.8H.6z" fill="#222"/></svg>
<span class="t" style="top:299.80px;font-size:11.5px;color:#2b2b2b;left:439.30px;transform-origin:0 50%;transform:scaleX(0.9768);">2023</span>
<span class="t" style="top:324.80px;font-size:11.5px;color:#2b2b2b;left:420.20px;transform-origin:0 50%;transform:scaleX(1.0000);">2</span>
<span class="t" style="top:324.80px;font-size:11.5px;color:#2b2b2b;left:521.20px;transform-origin:0 50%;transform:scaleX(1.0000);">3</span>
<span class="t" style="top:324.80px;font-size:11.5px;color:#2b2b2b;left:621.20px;transform-origin:0 50%;transform:scaleX(1.0000);">4</span>
<span class="t" style="top:324.80px;font-size:11.5px;color:#2b2b2b;left:721.20px;transform-origin:0 50%;transform:scaleX(1.0000);">5</span>
<span class="t" style="top:324.80px;font-size:11.5px;color:#2b2b2b;left:821.20px;transform-origin:0 50%;transform:scaleX(1.0000);">6</span>
<div style="left:188px;top:346px;width:719px;height:210.5px;overflow:hidden;background:#fff;">
<div style="left:327px;top:25px;width:300px;height:149px;background:#cce8ff;"></div>
<svg style="left:9px;top:7.699999999999989px;" width="7" height="8" viewBox="0 0 7 8"><path d="M.2 .1v7.6L6.2 3.9z" fill="#111"/></svg>
<span class="t" style="top:3.20px;font-size:12px;color:#2b2b2b;left:25.30px;transform-origin:0 50%;transform:scaleX(0.9374);">AG製品の開発</span>
<span class="t" style="top:2.80px;font-size:11.5px;color:#2b2b2b;right:397.20px;transform-origin:100% 50%;transform:scaleX(1.0000);">0.00</span>
<span class="t" style="top:2.80px;font-size:11.5px;color:#2b2b2b;right:297.20px;transform-origin:100% 50%;transform:scaleX(1.0000);">0.00</span>
<span class="t" style="top:2.80px;font-size:11.5px;color:#2b2b2b;right:197.20px;transform-origin:100% 50%;transform:scaleX(1.0000);">13.00</span>
<span class="t" style="top:2.80px;font-size:11.5px;color:#2b2b2b;right:97.20px;transform-origin:100% 50%;transform:scaleX(1.0000);">51.50</span>
<span class="t" style="top:2.80px;font-size:11.5px;color:#2b2b2b;right:-2.80px;transform-origin:100% 50%;transform:scaleX(1.0000);">0.00</span>
<div style="left:0px;top:24px;width:719px;height:1px;background:#d0d0d0;"></div>
<svg style="left:9px;top:32.69999999999999px;" width="7" height="8" viewBox="0 0 7 8"><path d="M.2 .1v7.6L6.2 3.9z" fill="#111"/></svg>
<span class="t" style="top:28.20px;font-size:12px;color:#2b2b2b;left:25.30px;transform-origin:0 50%;transform:scaleX(0.9777);">A機能の開発</span>
<span class="t" style="top:27.80px;font-size:11.5px;color:#2b2b2b;right:397.20px;transform-origin:100% 50%;transform:scaleX(1.0000);">0.00</span>
<span class="t" style="top:27.80px;font-size:11.5px;color:#2b2b2b;right:297.20px;transform-origin:100% 50%;transform:scaleX(1.0000);">275.25</span>
<span class="t" style="top:27.80px;font-size:11.5px;color:#2b2b2b;right:197.20px;transform-origin:100% 50%;transform:scaleX(1.0000);">322.00</span>
<span class="t" style="top:27.80px;font-size:11.5px;color:#2b2b2b;right:97.20px;transform-origin:100% 50%;transform:scaleX(1.0000);">342.00</span>
<span class="t" style="top:27.80px;font-size:11.5px;color:#2b2b2b;right:-2.80px;transform-origin:100% 50%;transform:scaleX(1.0000);">0.00</span>
<div style="left:0px;top:49px;width:719px;height:1px;background:#d0d0d0;"></div>
<svg style="left:9px;top:57.69999999999999px;" width="7" height="8" viewBox="0 0 7 8"><path d="M.2 .1v7.6L6.2 3.9z" fill="#111"/></svg>
<span class="t" style="top:53.20px;font-size:12px;color:#2b2b2b;left:25.30px;transform-origin:0 50%;transform:scaleX(0.9704);">B製品の開発</span>
<span class="t" style="top:52.80px;font-size:11.5px;color:#2b2b2b;right:397.20px;transform-origin:100% 50%;transform:scaleX(1.0000);">0.00</span>
<span class="t" style="top:52.80px;font-size:11.5px;color:#2b2b2b;right:297.20px;transform-origin:100% 50%;transform:scaleX(1.0000);">35.75</span>
<span class="t" style="top:52.80px;font-size:11.5px;color:#2b2b2b;right:197.20px;transform-origin:100% 50%;transform:scaleX(1.0000);">55.50</span>
<span class="t" style="top:52.80px;font-size:11.5px;color:#2b2b2b;right:97.20px;transform-origin:100% 50%;transform:scaleX(1.0000);">34.75</span>
<span class="t" style="top:52.80px;font-size:11.5px;color:#2b2b2b;right:-2.80px;transform-origin:100% 50%;transform:scaleX(1.0000);">0.00</span>
<div style="left:0px;top:74px;width:719px;height:1px;background:#d0d0d0;"></div>
<svg style="left:9px;top:82.69999999999999px;" width="7" height="8" viewBox="0 0 7 8"><path d="M.2 .1v7.6L6.2 3.9z" fill="#111"/></svg>
<span class="t" style="top:78.20px;font-size:12px;color:#2b2b2b;left:25.30px;transform-origin:0 50%;transform:scaleX(0.9747);">L商品の開発</span>
<span class="t" style="top:77.80px;font-size:11.5px;color:#2b2b2b;right:397.20px;transform-origin:100% 50%;transform:scaleX(1.0000);">40.00</span>
<span class="t" style="top:77.80px;font-size:11.5px;color:#2b2b2b;right:297.20px;transform-origin:100% 50%;transform:scaleX(1.0000);">196.50</span>
<span class="t" style="top:77.80px;font-size:11.5px;color:#2b2b2b;right:197.20px;transform-origin:100% 50%;transform:scaleX(1.0000);">293.50</span>
<span class="t" style="top:77.80px;font-size:11.5px;color:#2b2b2b;right:97.20px;transform-origin:100% 50%;transform:scaleX(1.0000);">308.50</span>
<span class="t" style="top:77.80px;font-size:11.5px;color:#2b2b2b;right:-2.80px;transform-origin:100% 50%;transform:scaleX(1.0000);">0.00</span>
<div style="left:0px;top:99px;width:719px;height:1px;background:#d0d0d0;"></div>
<svg style="left:9px;top:107.69999999999999px;" width="7" height="8" viewBox="0 0 7 8"><path d="M.2 .1v7.6L6.2 3.9z" fill="#111"/></svg>
<span class="t" style="top:103.20px;font-size:12px;color:#2b2b2b;left:25.30px;transform-origin:0 50%;transform:scaleX(0.9857);">M機能の研究</span>
<span class="t" style="top:102.80px;font-size:11.5px;color:#2b2b2b;right:397.20px;transform-origin:100% 50%;transform:scaleX(1.0000);">0.00</span>
<span class="t" style="top:102.80px;font-size:11.5px;color:#2b2b2b;right:297.20px;transform-origin:100% 50%;transform:scaleX(1.0000);">0.00</span>
<span class="t" style="top:102.80px;font-size:11.5px;color:#2b2b2b;right:197.20px;transform-origin:100% 50%;transform:scaleX(1.0000);">69.00</span>
<span class="t" style="top:102.80px;font-size:11.5px;color:#2b2b2b;right:97.20px;transform-origin:100% 50%;transform:scaleX(1.0000);">200.50</span>
<span class="t" style="top:102.80px;font-size:11.5px;color:#2b2b2b;right:-2.80px;transform-origin:100% 50%;transform:scaleX(1.0000);">0.00</span>
<div style="left:0px;top:124px;width:719px;height:1px;background:#d0d0d0;"></div>
<svg style="left:9px;top:132.7px;" width="7" height="8" viewBox="0 0 7 8"><path d="M.2 .1v7.6L6.2 3.9z" fill="#111"/></svg>
<span class="t" style="top:128.20px;font-size:12px;color:#2b2b2b;left:25.30px;transform-origin:0 50%;transform:scaleX(0.9829);">N機能の研究</span>
<span class="t" style="top:127.80px;font-size:11.5px;color:#2b2b2b;right:397.20px;transform-origin:100% 50%;transform:scaleX(1.0000);">0.00</span>
<span class="t" style="top:127.80px;font-size:11.5px;color:#2b2b2b;right:297.20px;transform-origin:100% 50%;transform:scaleX(1.0000);">0.00</span>
<span class="t" style="top:127.80px;font-size:11.5px;color:#2b2b2b;right:197.20px;transform-origin:100% 50%;transform:scaleX(1.0000);">24.00</span>
<span class="t" style="top:127.80px;font-size:11.5px;color:#2b2b2b;right:97.20px;transform-origin:100% 50%;transform:scaleX(1.0000);">250.50</span>
<span class="t" style="top:127.80px;font-size:11.5px;color:#2b2b2b;right:-2.80px;transform-origin:100% 50%;transform:scaleX(1.0000);">0.00</span>
<div style="left:0px;top:149px;width:719px;height:1px;background:#d0d0d0;"></div>
<svg style="left:9px;top:157.7px;" width="7" height="8" viewBox="0 0 7 8"><path d="M.2 .1v7.6L6.2 3.9z" fill="#111"/></svg>
<span class="t" style="top:153.20px;font-size:12px;color:#2b2b2b;left:25.30px;transform-origin:0 50%;transform:scaleX(0.9806);">O製品の試作</span>
<span class="t" style="top:152.80px;font-size:11.5px;color:#2b2b2b;right:397.20px;transform-origin:100% 50%;transform:scaleX(1.0000);">0.00</span>
<span class="t" style="top:152.80px;font-size:11.5px;color:#2b2b2b;right:297.20px;transform-origin:100% 50%;transform:scaleX(1.0000);">0.00</span>
<span class="t" style="top:152.80px;font-size:11.5px;color:#2b2b2b;right:197.20px;transform-origin:100% 50%;transform:scaleX(1.0000);">71.00</span>
<span class="t" style="top:152.80px;font-size:11.5px;color:#2b2b2b;right:97.20px;transform-origin:100% 50%;transform:scaleX(1.0000);">163.50</span>
<span class="t" style="top:152.80px;font-size:11.5px;color:#2b2b2b;right:-2.80px;transform-origin:100% 50%;transform:scaleX(1.0000);">0.00</span>
<div style="left:0px;top:174px;width:719px;height:1px;background:#d0d0d0;"></div>
<svg style="left:9px;top:182.70000000000005px;" width="7" height="8" viewBox="0 0 7 8"><path d="M.2 .1v7.6L6.2 3.9z" fill="#111"/></svg>
<span class="t" style="top:178.20px;font-size:12px;color:#2b2b2b;left:25.30px;transform-origin:0 50%;transform:scaleX(0.9704);">P機器の開発</span>
<span class="t" style="top:177.80px;font-size:11.5px;color:#2b2b2b;right:397.20px;transform-origin:100% 50%;transform:scaleX(1.0000);">0.00</span>
<span class="t" style="top:177.80px;font-size:11.5px;color:#2b2b2b;right:297.20px;transform-origin:100% 50%;transform:scaleX(1.0000);">0.00</span>
<span class="t" style="top:177.80px;font-size:11.5px;color:#2b2b2b;right:197.20px;transform-origin:100% 50%;transform:scaleX(1.0000);">26.00</span>
<span class="t" style="top:177.80px;font-size:11.5px;color:#2b2b2b;right:97.20px;transform-origin:100% 50%;transform:scaleX(1.0000);">136.50</span>
<span class="t" style="top:177.80px;font-size:11.5px;color:#2b2b2b;right:-2.80px;transform-origin:100% 50%;transform:scaleX(1.0000);">0.00</span>
<div style="left:0px;top:199px;width:225px;height:1px;background:#d0d0d0;"></div>
<svg style="left:9px;top:207.70000000000005px;" width="7" height="8" viewBox="0 0 7 8"><path d="M.2 .1v7.6L6.2 3.9z" fill="#111"/></svg>
<span class="t" style="top:203.20px;font-size:12px;color:#2b2b2b;left:25.30px;transform-origin:0 50%;transform:scaleX(0.9591);">Q商品開発</span>
<div style="left:225px;top:0px;width:1px;height:199px;background:#d0d0d0;"></div>
<div style="left:326px;top:0px;width:1px;height:199px;background:#d0d0d0;"></div>
<div style="left:426px;top:0px;width:1px;height:199px;background:#d0d0d0;"></div>
<div style="left:526px;top:0px;width:1px;height:199px;background:#d0d0d0;"></div>
<div style="left:626px;top:0px;width:1px;height:199px;background:#d0d0d0;"></div>
<div style="left:527px;top:150px;width:99px;height:24px;border:1px dashed #222;"></div>
</div>
<div style="left:907px;top:346px;width:12px;height:211px;background:#fff;"></div>
<svg style="left:908.5px;top:347px;" width="9" height="6" viewBox="0 0 9 6"><path d="M.3 5.4L4.3 .4l4 5z" fill="#5f5f5f"/></svg>
<div style="left:910px;top:357px;width:6px;height:19px;background:#5f5f5f;border-radius:3px;"></div>
<svg style="left:908.5px;top:536.5px;" width="9" height="6" viewBox="0 0 9 6"><path d="M.3 .4l4 5 4-5z" fill="#5f5f5f"/></svg>
<div style="left:414px;top:545px;width:505px;height:12.5px;background:#fff;"></div>
<svg style="left:416.5px;top:547.5px;" width="6" height="9" viewBox="0 0 6 9"><path d="M5.6 .3L.4 4.3l5.2 4z" fill="#5f5f5f"/></svg>
<div style="left:427.5px;top:548.5px;width:384.5px;height:5.5px;background:#5f5f5f;border-radius:3px;"></div>
<svg style="left:897px;top:547.5px;" width="6" height="9" viewBox="0 0 6 9"><path d="M.4 .3l5.2 4-5.2 4z" fill="#5f5f5f"/></svg>
<div style="left:907px;top:546px;width:11px;height:11px;background:#f0f0f0;"></div>
<div style="left:539px;top:553px;width:30px;height:8.5px;background:#f3f3f3;border:1px solid #cfcfcf;border-bottom:none;"></div>
<svg style="left:550px;top:556px;" width="8" height="5" viewBox="0 0 8 5"><path d="M.3 .5h6.6L3.6 3.8z" fill="#999"/></svg>
<div style="left:187px;top:572px;width:732px;height:213px;background:#fff;border:1px solid #c2c2c2;"></div>
<svg style="left:0px;top:0px;pointer-events:none;" width="1200" height="819" viewBox="0 0 1200 819"><rect x="239.5" y="588.5" width="531.0" height="75.0" fill="#f7f7f7"/><path d="M239.5 663.5H770.5" stroke="#d0d0d0" stroke-width="1"/><path d="M239.5 748.5V588.5H770.5V748.5" fill="none" stroke="#d4d4d4" stroke-width="1"/><path d="M233.5 748.5H770.5" stroke="#c8c8c8" stroke-width="1"/><path d="M237.0 731.5h2.5M237.0 714.5h2.5M237.0 697.5h2.5M237.0 680.5h2.5M233.5 663.5h6M237.0 646.5h2.5M237.0 629.5h2.5M237.0 612.5h2.5M237.0 595.5h2.5M257.5 748.5v3.5M293.5 748.5v3.5M363.5 748.5v3.5M399.5 748.5v3.5M434.5 748.5v3.5M470.5 748.5v3.5M540.5 748.5v3.5M576.5 748.5v3.5M611.5 748.5v3.5M647.5 748.5v3.5M717.5 748.5v3.5M753.5 748.5v3.5M328.5 748.5v6.5M505.5 748.5v6.5M682.5 748.5v6.5" stroke="#c8c8c8" stroke-width="1" fill="none"/><defs><clipPath id="pc"><rect x="239.5" y="588.5" width="531.0" height="160.0"/></clipPath><radialGradient id="g0" cx="45%" cy="35%" r="70%"><stop offset="0" stop-color="#2679b8"/><stop offset="1" stop-color="#1f6fb0"/></radialGradient><radialGradient id="g1" cx="45%" cy="35%" r="70%"><stop offset="0" stop-color="#d45d4a"/><stop offset="1" stop-color="#c9513f"/></radialGradient><radialGradient id="g2" cx="45%" cy="35%" r="70%"><stop offset="0" stop-color="#e9b535"/><stop offset="1" stop-color="#dfa92a"/></radialGradient><radialGradient id="g3" cx="45%" cy="35%" r="70%"><stop offset="0" stop-color="#79c745"/><stop offset="1" stop-color="#6dbb3b"/></radialGradient><radialGradient id="g4" cx="45%" cy="35%" r="70%"><stop offset="0" stop-color="#8fcbf4"/><stop offset="1" stop-color="#85c2ee"/></radialGradient><radialGradient id="g5" cx="45%" cy="35%" r="70%"><stop offset="0" stop-color="#e27f42"/><stop offset="1" stop-color="#d97435"/></radialGradient></defs><g clip-path="url(#pc)"><polyline points="328.5,631.52 505.5,611.65 682.5,603.15" fill="none" stroke="#2679b8" stroke-width="2"/><circle cx="328.5" cy="631.52" r="5" fill="url(#g0)"/><circle cx="505.5" cy="611.65" r="5" fill="url(#g0)"/><circle cx="682.5" cy="603.15" r="5" fill="url(#g0)"/><polyline points="328.5,733.31 505.5,724.91 682.5,733.73" fill="none" stroke="#d45d4a" stroke-width="2"/><circle cx="328.5" cy="733.31" r="5" fill="url(#g1)"/><circle cx="505.5" cy="724.91" r="5" fill="url(#g1)"/><circle cx="682.5" cy="733.73" r="5" fill="url(#g1)"/><polyline points="328.5,664.99 505.5,623.76 682.5,617.39" fill="none" stroke="#e9b535" stroke-width="2"/><circle cx="328.5" cy="664.99" r="5" fill="url(#g2)"/><circle cx="505.5" cy="623.76" r="5" fill="url(#g2)"/><circle cx="682.5" cy="617.39" r="5" fill="url(#g2)"/><polyline points="328.5,748.50 505.5,719.17 682.5,663.29" fill="none" stroke="#79c745" stroke-width="2"/><circle cx="328.5" cy="748.50" r="5" fill="url(#g3)"/><circle cx="505.5" cy="719.17" r="5" fill="url(#g3)"/><circle cx="682.5" cy="663.29" r="5" fill="url(#g3)"/><polyline points="328.5,748.50 505.5,738.30 682.5,642.04" fill="none" stroke="#8fcbf4" stroke-width="2"/><circle cx="328.5" cy="748.50" r="5" fill="url(#g4)"/><circle cx="505.5" cy="738.30" r="5" fill="url(#g4)"/><circle cx="682.5" cy="642.04" r="5" fill="url(#g4)"/><polyline points="328.5,748.50 505.5,718.33 682.5,679.01" fill="none" stroke="#e27f42" stroke-width="2"/><circle cx="328.5" cy="748.50" r="5" fill="url(#g5)"/><circle cx="505.5" cy="718.33" r="5" fill="url(#g5)"/><circle cx="682.5" cy="679.01" r="5" fill="url(#g5)"/></g><rect x="802.5" y="607" width="11.5" height="2" fill="#2679b8"/><rect x="802.5" y="627" width="11.5" height="2" fill="#d45d4a"/><rect x="802.5" y="647" width="11.5" height="2" fill="#e9b535"/><rect x="802.5" y="667" width="11.5" height="2" fill="#79c745"/><rect x="802.5" y="687" width="11.5" height="2" fill="#8fcbf4"/><rect x="802.5" y="707" width="11.5" height="2" fill="#e27f42"/></svg>
<span class="t" style="top:654.50px;font-size:12px;color:#333;right:971.20px;transform-origin:100% 50%;transform:scaleX(0.9485);">200</span>
<span class="t" style="top:739.00px;font-size:12px;color:#333;right:971.20px;transform-origin:100% 50%;transform:scaleX(1.0000);">0</span>
<span class="t" style="top:754.50px;font-size:12px;color:#333;left:328.80px;transform-origin:0 50%;transform:translateX(-48.080%) scaleX(0.9616);">2023 | 3</span>
<span class="t" style="top:754.50px;font-size:12px;color:#333;left:505.80px;transform-origin:0 50%;transform:translateX(-48.080%) scaleX(0.9616);">2023 | 4</span>
<span class="t" style="top:754.50px;font-size:12px;color:#333;left:682.80px;transform-origin:0 50%;transform:translateX(-48.080%) scaleX(0.9616);">2023 | 5</span>
<span class="t" style="top:599.00px;font-size:12px;color:#333;left:818.50px;transform-origin:0 50%;transform:scaleX(0.9483);">A機能の開発</span>
<span class="t" style="top:619.00px;font-size:12px;color:#333;left:818.50px;transform-origin:0 50%;transform:scaleX(0.9410);">B製品の開発</span>
<span class="t" style="top:639.00px;font-size:12px;color:#333;left:818.50px;transform-origin:0 50%;transform:scaleX(0.9447);">L商品の開発</span>
<span class="t" style="top:659.00px;font-size:12px;color:#333;left:818.50px;transform-origin:0 50%;transform:scaleX(0.9643);">M機能の研究</span>
<span class="t" style="top:679.00px;font-size:12px;color:#333;left:818.50px;transform-origin:0 50%;transform:scaleX(0.9611);">N機能の研究</span>
<span class="t" style="top:699.00px;font-size:12px;color:#333;left:818.50px;transform-origin:0 50%;transform:scaleX(0.9518);">O製品の試作</span>
<div style="left:940px;top:184px;width:247px;height:603px;background:#fff;"></div>
<div class="gb" style="left:948px;top:208.5px;width:232px;height:218.0px;"></div>
<div style="left:957.5px;top:203.5px;width:96.5px;height:13px;background:#fff;"></div>
<span class="t" style="top:200.50px;font-size:12px;color:#262626;left:962.50px;transform-origin:0 50%;transform:scaleX(0.7207);">グリッドのオプション</span>
<div class="cb" style="left:965px;top:233px;width:18px;height:18px;"></div>
<span class="t" style="top:233.50px;font-size:12px;color:#262626;left:989.60px;transform-origin:0 50%;transform:scaleX(0.9470);">合計行を表示</span>
<div class="cbk" style="left:965px;top:265px;width:18px;height:18px;"><svg style="left:3.5px;top:4.5px" width="11" height="9" viewBox="0 0 11 9"><path d="M.8 4.6l3.2 3.2L10.2 1.2" fill="none" stroke="#fff" stroke-width="1.3"/></svg></div>
<span class="t" style="top:265.50px;font-size:12px;color:#262626;left:989.60px;transform-origin:0 50%;transform:scaleX(0.9522);">総合計行を表示</span>
<div class="cbk" style="left:965px;top:297px;width:18px;height:18px;"><svg style="left:3.5px;top:4.5px" width="11" height="9" viewBox="0 0 11 9"><path d="M.8 4.6l3.2 3.2L10.2 1.2" fill="none" stroke="#fff" stroke-width="1.3"/></svg></div>
<span class="t" style="top:297.50px;font-size:12px;color:#262626;left:989.60px;transform-origin:0 50%;transform:scaleX(0.9470);">合計列を表示</span>
<div class="cbk" style="left:965px;top:329px;width:18px;height:18px;"><svg style="left:3.5px;top:4.5px" width="11" height="9" viewBox="0 0 11 9"><path d="M.8 4.6l3.2 3.2L10.2 1.2" fill="none" stroke="#fff" stroke-width="1.3"/></svg></div>
<span class="t" style="top:329.50px;font-size:12px;color:#262626;left:989.60px;transform-origin:0 50%;transform:scaleX(0.9522);">総合計列を表示</span>
<span class="t" style="top:361.00px;font-size:12px;color:#262626;left:964.40px;transform-origin:0 50%;transform:scaleX(0.9663);">合計行の表示位置:</span>
<div class="btn" style="left:1071px;top:354px;width:97px;height:25px;"></div>
<svg style="left:1080px;top:359px;" width="15" height="15" viewBox="0 0 15 15"><rect x=".5" y=".5" width="13.5" height="13.5" fill="#fff" stroke="#666" stroke-width="1"/><rect x="2.3" y="9.6" width="10" height="2.8" fill="#6fa590"/></svg>
<span class="t" style="top:359.30px;font-size:12px;color:#262626;left:1102.80px;transform-origin:0 50%;transform:scaleX(0.9161);">末尾</span>
<svg style="left:1148px;top:364px;" width="11" height="7" viewBox="0 0 11 7"><path d="M1 1l4.4 4.4L9.8 1" stroke="#555" stroke-width="1" fill="none"/></svg>
<span class="t" style="top:390.30px;font-size:12px;color:#262626;left:964.40px;transform-origin:0 50%;transform:scaleX(0.9663);">合計列の表示位置:</span>
<div class="btn" style="left:1071px;top:384px;width:97px;height:25px;"></div>
<svg style="left:1080px;top:389px;" width="15" height="15" viewBox="0 0 15 15"><rect x=".5" y=".5" width="13.5" height="13.5" fill="#fff" stroke="#666" stroke-width="1"/><rect x="9.6" y="2.3" width="2.8" height="10" fill="#6fa590"/></svg>
<span class="t" style="top:389.30px;font-size:12px;color:#262626;left:1102.80px;transform-origin:0 50%;transform:scaleX(0.9161);">末尾</span>
<svg style="left:1148px;top:394px;" width="11" height="7" viewBox="0 0 11 7"><path d="M1 1l4.4 4.4L9.8 1" stroke="#555" stroke-width="1" fill="none"/></svg>
<div class="gb" style="left:948px;top:440.5px;width:232px;height:87.5px;"></div>
<div style="left:957.5px;top:435.5px;width:35.5px;height:13px;background:#fff;"></div>
<span class="t" style="top:432.50px;font-size:12px;color:#262626;left:962.50px;transform-origin:0 50%;transform:scaleX(0.7080);">グラフ</span>
<span class="t" style="top:461.60px;font-size:12px;color:#262626;left:964.40px;transform-origin:0 50%;transform:scaleX(0.8282);">グラフの種類:</span>
<div class="btn" style="left:1037px;top:458px;width:131px;height:26px;"></div>
<svg style="left:1045.5px;top:462.5px;" width="18" height="17" viewBox="0 0 18 17"><path d="M2 2L6.8 4L15 1.8" fill="none" stroke="#5a9e84" stroke-width="1"/><circle cx="2" cy="2" r="1.35" fill="#fff" stroke="#5a9e84" stroke-width="1"/><circle cx="6.8" cy="4" r="1.35" fill="#fff" stroke="#5a9e84" stroke-width="1"/><circle cx="15" cy="1.8" r="1.35" fill="#fff" stroke="#5a9e84" stroke-width="1"/><path d="M2 15L6.8 9.2L15 13.8" fill="none" stroke="#4a86c8" stroke-width="1"/><circle cx="2" cy="15" r="1.35" fill="#fff" stroke="#4a86c8" stroke-width="1"/><circle cx="6.8" cy="9.2" r="1.35" fill="#fff" stroke="#4a86c8" stroke-width="1"/><circle cx="15" cy="13.8" r="1.35" fill="#fff" stroke="#4a86c8" stroke-width="1"/><path d="M2 7.8L6.8 13.2L15 7.8" fill="none" stroke="#ebb04a" stroke-width="1"/><circle cx="2" cy="7.8" r="1.35" fill="#fff" stroke="#ebb04a" stroke-width="1"/><circle cx="6.8" cy="13.2" r="1.35" fill="#fff" stroke="#ebb04a" stroke-width="1"/><circle cx="15" cy="7.8" r="1.35" fill="#fff" stroke="#ebb04a" stroke-width="1"/></svg>
<span class="t" style="top:461.50px;font-size:12px;color:#262626;left:1068.40px;transform-origin:0 50%;transform:scaleX(0.9329);">折れ線</span>
<svg style="left:1148px;top:468px;" width="11" height="7" viewBox="0 0 11 7"><path d="M1 1l4.4 4.4L9.8 1" stroke="#555" stroke-width="1" fill="none"/></svg>
<div class="cb" style="left:965px;top:495px;width:18px;height:18px;"></div>
<span class="t" style="top:495.50px;font-size:12px;color:#262626;left:989.60px;transform-origin:0 50%;transform:scaleX(0.8290);">ラベルを表示</span>
<div class="gb" style="left:948px;top:542.5px;width:232px;height:87.5px;"></div>
<div style="left:957.5px;top:537.5px;width:68.5px;height:13px;background:#fff;"></div>
<span class="t" style="top:534.50px;font-size:12px;color:#262626;left:962.50px;transform-origin:0 50%;transform:scaleX(0.8123);">グラフの方向</span>
<div style="left:964px;top:565px;width:20px;height:20px;border-radius:50%;border:5px solid #005fb8;background:#fff;"></div>
<span class="t" style="top:566.40px;font-size:12px;color:#262626;left:990.30px;transform-origin:0 50%;transform:scaleX(0.8618);">列を系列にする</span>
<div style="left:964px;top:593px;width:20px;height:20px;border-radius:50%;border:1px solid #c0c0c0;background:#fcfcfc;"></div>
<span class="t" style="top:594.40px;font-size:12px;color:#262626;left:990.30px;transform-origin:0 50%;transform:scaleX(0.8618);">行を系列にする</span>
<div class="gb" style="left:948px;top:644.5px;width:232px;height:122.0px;"></div>
<div style="left:957.5px;top:639.5px;width:89px;height:13px;background:#fff;"></div>
<span class="t" style="top:636.50px;font-size:12px;color:#262626;left:962.50px;transform-origin:0 50%;transform:scaleX(0.7314);">グラフのオプション</span>
<div class="cbk" style="left:965px;top:669px;width:18px;height:18px;"><svg style="left:3.5px;top:4.5px" width="11" height="9" viewBox="0 0 11 9"><path d="M.8 4.6l3.2 3.2L10.2 1.2" fill="none" stroke="#fff" stroke-width="1.3"/></svg></div>
<span class="t" style="top:669.50px;font-size:12px;color:#262626;left:989.60px;transform-origin:0 50%;transform:scaleX(0.9530);">選択範囲のみ表示</span>
<div class="cb" style="left:965px;top:701px;width:18px;height:18px;"></div>
<span class="t" style="top:701.50px;font-size:12px;color:#262626;left:989.60px;transform-origin:0 50%;transform:scaleX(0.9373);">列の総合計を表示</span>
<div class="cb" style="left:965px;top:733px;width:18px;height:18px;"></div>
<span class="t" style="top:733.50px;font-size:12px;color:#262626;left:989.60px;transform-origin:0 50%;transform:scaleX(0.9373);">行の総合計を表示</span>
<svg style="left:1186px;top:806px;" width="10" height="10" viewBox="0 0 10 10"><g fill="#fff"><rect x="6.5" y=".5" width="1.2" height="1.2"/><rect x="4.5" y="2.5" width="1.2" height="1.2"/><rect x="6.5" y="2.5" width="1.2" height="1.2"/><rect x="2.5" y="4.5" width="1.2" height="1.2"/><rect x="4.5" y="4.5" width="1.2" height="1.2"/><rect x="6.5" y="4.5" width="1.2" height="1.2"/><rect x=".5" y="6.5" width="1.2" height="1.2"/><rect x="2.5" y="6.5" width="1.2" height="1.2"/><rect x="4.5" y="6.5" width="1.2" height="1.2"/><rect x="6.5" y="6.5" width="1.2" height="1.2"/></g></svg>
<div class="red" style="left:6.7px;top:66.3px;width:697.9px;height:112.10000000000001px;"></div>
<div class="red" style="left:6.7px;top:181.5px;width:173.9px;height:606.9px;"></div>
<div class="red" style="left:183.5px;top:181.5px;width:749.1px;height:382.9px;"></div>
<div class="red" style="left:183.5px;top:568.3px;width:749.1px;height:220.10000000000002px;"></div>
<div class="red" style="left:938.4px;top:181.5px;width:250.0000000000001px;height:606.9px;"></div>
<div class="badge" style="left:17.5px;top:74.5px;width:27px;height:27px;"></div>
<span class="t" style="top:77.80px;font-size:14px;color:#fff;font-weight:700;left:31.00px;transform-origin:0 50%;transform:translateX(-50.000%) scaleX(1.0000);">1</span>
<div class="badge" style="left:17.5px;top:194.5px;width:27px;height:27px;"></div>
<span class="t" style="top:197.80px;font-size:14px;color:#fff;font-weight:700;left:31.00px;transform-origin:0 50%;transform:translateX(-50.000%) scaleX(1.0000);">2</span>
<div class="badge" style="left:201.5px;top:188.5px;width:27px;height:27px;"></div>
<span class="t" style="top:191.80px;font-size:14px;color:#fff;font-weight:700;left:215.00px;transform-origin:0 50%;transform:translateX(-50.000%) scaleX(1.0000);">3</span>
<div class="badge" style="left:196.5px;top:577.5px;width:27px;height:27px;"></div>
<span class="t" style="top:580.80px;font-size:14px;color:#fff;font-weight:700;left:210.00px;transform-origin:0 50%;transform:translateX(-50.000%) scaleX(1.0000);">4</span>
<div class="badge" style="left:951.8px;top:188.8px;width:27px;height:27px;"></div>
<span class="t" style="top:192.10px;font-size:14px;color:#fff;font-weight:700;left:965.30px;transform-origin:0 50%;transform:translateX(-50.000%) scaleX(1.0000);">5</span>
<div style="left:0px;top:0px;width:1200px;height:819px;border:1px solid #9c9c9c;border-radius:8px;box-shadow:inset 0 0 0 1px rgba(255,255,255,.5);pointer-events:none;"></div>
</div></body></html>
